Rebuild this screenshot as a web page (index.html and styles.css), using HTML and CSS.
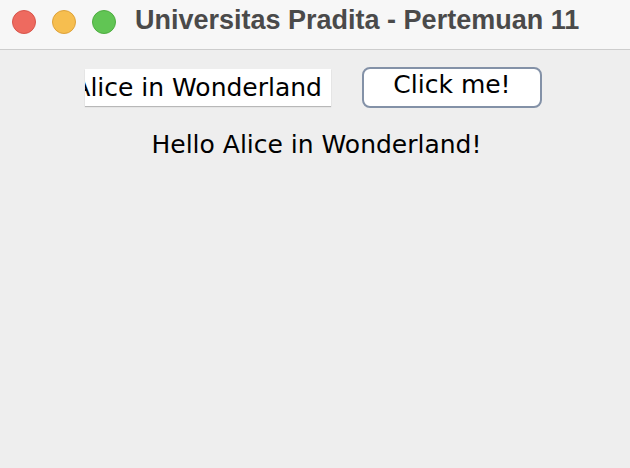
FILE: index.html
```html
<!DOCTYPE html>
<html>
<head>
<meta charset="utf-8">
<link rel="stylesheet" href="styles.css">
</head>
<body>
<div class="window">
  <div class="titlebar">
    <div class="lights">
      <span class="light red"></span>
      <span class="light yellow"></span>
      <span class="light green"></span>
    </div>
    <div class="title">Universitas Pradita - Pertemuan 11</div>
  </div>
  <div class="content">
    <div class="row">
      <div class="field"><span class="field-text">Alice in Wonderland</span></div>
      <button class="btn">Click me!</button>
    </div>
    <div class="greeting">Hello Alice in Wonderland!</div>
  </div>
</div>
</body>
</html>
```
FILE: styles.css
```css
html, body {
  margin: 0;
  padding: 0;
}
body {
  width: 630px;
  height: 468px;
  overflow: hidden;
  background: #eeeeee;
  font-family: "DejaVu Sans", "Open Sans", sans-serif;
}
.window {
  display: flex;
  flex-direction: column;
  height: 468px;
}
.titlebar {
  height: 50px;
  box-sizing: border-box;
  background: #f7f7f7;
  border-bottom: 1px solid #cdcdcd;
  display: flex;
  align-items: flex-start;
  padding-left: 12px;
}
.lights {
  display: flex;
  gap: 16px;
  margin-top: 10px;
}
.light {
  width: 24px;
  height: 24px;
  border-radius: 50%;
  box-sizing: border-box;
  display: block;
}
.red { background: #ee6a5f; border: 1px solid #d8554b; }
.yellow { background: #f6be4f; border: 1px solid #dea23a; }
.green { background: #61c554; border: 1px solid #4ead41; }
.title {
  margin-left: 19px;
  margin-top: 5px;
  line-height: 31px;
  font-family: "Liberation Sans", Arial, sans-serif;
  font-weight: bold;
  font-size: 27px;
  color: #4a4a4a;
  white-space: nowrap;
}
.content {
  flex: 1;
  background: #eeeeee;
}
.row {
  display: flex;
  align-items: center;
  padding-left: 85px;
  padding-top: 17px;
}
.field {
  width: 246px;
  height: 37px;
  box-sizing: border-box;
  background: #ffffff;
  box-shadow: 0 1px 1px #b8b8b8;
  overflow: hidden;
  display: flex;
  align-items: center;
  justify-content: flex-end;
  padding-right: 9px;
}
.field-text {
  white-space: nowrap;
  font-size: 25px;
  color: #000;
  flex-shrink: 0;
}
.btn {
  margin-left: 31px;
  width: 180px;
  height: 41px;
  box-sizing: border-box;
  background: #ffffff;
  border: 2px solid #8391a7;
  border-radius: 8px;
  font-family: "DejaVu Sans", sans-serif;
  font-size: 25px;
  color: #000;
  padding: 0 0 6px 0;
}
.greeting {
  text-align: center;
  font-size: 25px;
  color: #000;
  margin-top: 22px;
  padding-left: 3px;
}
```
